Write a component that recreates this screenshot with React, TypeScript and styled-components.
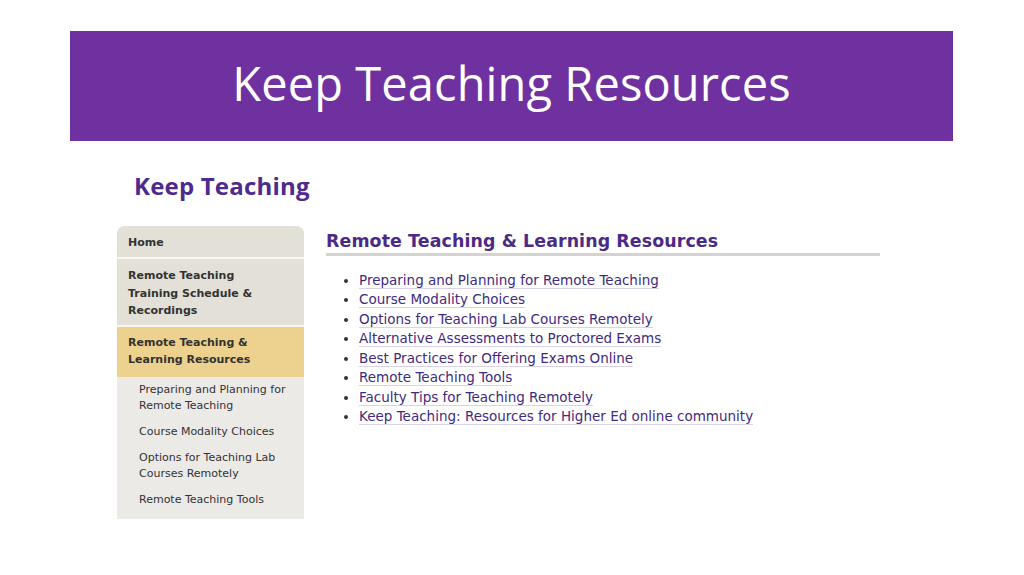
import styled, { createGlobalStyle } from "styled-components";

const GlobalStyle = createGlobalStyle`
  html, body {
    margin: 0;
    padding: 0;
    background: #ffffff;
  }
  body {
    font-family: "DejaVu Sans", "Liberation Sans", sans-serif;
  }
`;

const Page = styled.div`
  width: 1024px;
  height: 575px;
  padding-top: 31px;
  box-sizing: border-box;
  overflow: hidden;
`;

const Banner = styled.header`
  margin: 0 71px 0 70px;
  height: 110px;
  background: #6f31a0;
  display: flex;
  align-items: center;
  justify-content: center;
`;

const BannerTitle = styled.h1`
  margin: 0;
  color: #ffffff;
  font-family: "Open Sans", sans-serif;
  font-weight: 400;
  font-size: 47px;
  letter-spacing: 0.1px;
  padding-bottom: 6px;
`;

const Content = styled.div`
  padding: 26px 0 0 117px;
`;

const SiteTitle = styled.h2`
  margin: 0 0 21px 17px;
  font-family: "Open Sans", sans-serif;
  font-weight: 700;
  font-size: 24px;
  letter-spacing: 0.2px;
  color: #4e2a8e;
  line-height: 38px;
`;

const Columns = styled.div`
  display: flex;
  gap: 22px;
  align-items: flex-start;
`;

const Sidebar = styled.nav`
  width: 187px;
  border-radius: 8px 8px 0 0;
  overflow: hidden;
  background: #ebeae7;
  padding-bottom: 6px;
`;

const NavItem = styled.div<{ $active?: boolean }>`
  background: ${(p) => (p.$active ? "#edd18e" : "#e3e0d7")};
  border-bottom: ${(p) => (p.$active ? "0" : "2px solid #f7f6f3")};
  padding: ${(p) => (p.$active ? "7px 40px 8px 11px" : "8px 40px 6px 11px")};
  font-size: 11px;
  font-weight: 700;
  color: #333333;
  line-height: 17.3px;
`;

const SubItem = styled.div`
  padding: 5px 10px 5px 22px;
  font-size: 11px;
  color: #333333;
  line-height: 16px;
`;

const Main = styled.main`
  width: 554px;
  padding-top: 3px;
`;

const SectionTitle = styled.h3`
  margin: 0;
  font-size: 17.4px;
  font-weight: 700;
  color: #4b2a86;
  line-height: 24px;
  border-bottom: 3px solid #d4d3d0;
  letter-spacing: 0.1px;
`;

const LinkList = styled.ul`
  margin: 15px 0 0;
  padding: 0 0 0 33px;
  list-style: disc;
`;

const LinkItem = styled.li`
  font-size: 13.5px;
  line-height: 19.45px;
  color: #333;
`;

const Link = styled.a`
  color: #3f2a7e;
  text-decoration: none;
  border-bottom: 1px solid #d9d2e8;
`;

const links = [
  "Preparing and Planning for Remote Teaching",
  "Course Modality Choices",
  "Options for Teaching Lab Courses Remotely",
  "Alternative Assessments to Proctored Exams",
  "Best Practices for Offering Exams Online",
  "Remote Teaching Tools",
  "Faculty Tips for Teaching Remotely",
  "Keep Teaching: Resources for Higher Ed online community",
];

const subs = [
  "Preparing and Planning for Remote Teaching",
  "Course Modality Choices",
  "Options for Teaching Lab Courses Remotely",
  "Remote Teaching Tools",
];

export default function App() {
  return (
    <Page>
      <GlobalStyle />
      <Banner>
        <BannerTitle>Keep Teaching Resources</BannerTitle>
      </Banner>
      <Content>
        <SiteTitle>Keep Teaching</SiteTitle>
        <Columns>
          <Sidebar>
            <NavItem>Home</NavItem>
            <NavItem>Remote Teaching Training Schedule &amp; Recordings</NavItem>
            <NavItem $active>Remote Teaching &amp; Learning Resources</NavItem>
            <div>
              {subs.map((s) => (
                <SubItem key={s}>{s}</SubItem>
              ))}
            </div>
          </Sidebar>
          <Main>
            <SectionTitle>Remote Teaching &amp; Learning Resources</SectionTitle>
            <LinkList>
              {links.map((l) => (
                <LinkItem key={l}>
                  <Link href="#">{l}</Link>
                </LinkItem>
              ))}
            </LinkList>
          </Main>
        </Columns>
      </Content>
    </Page>
  );
}
